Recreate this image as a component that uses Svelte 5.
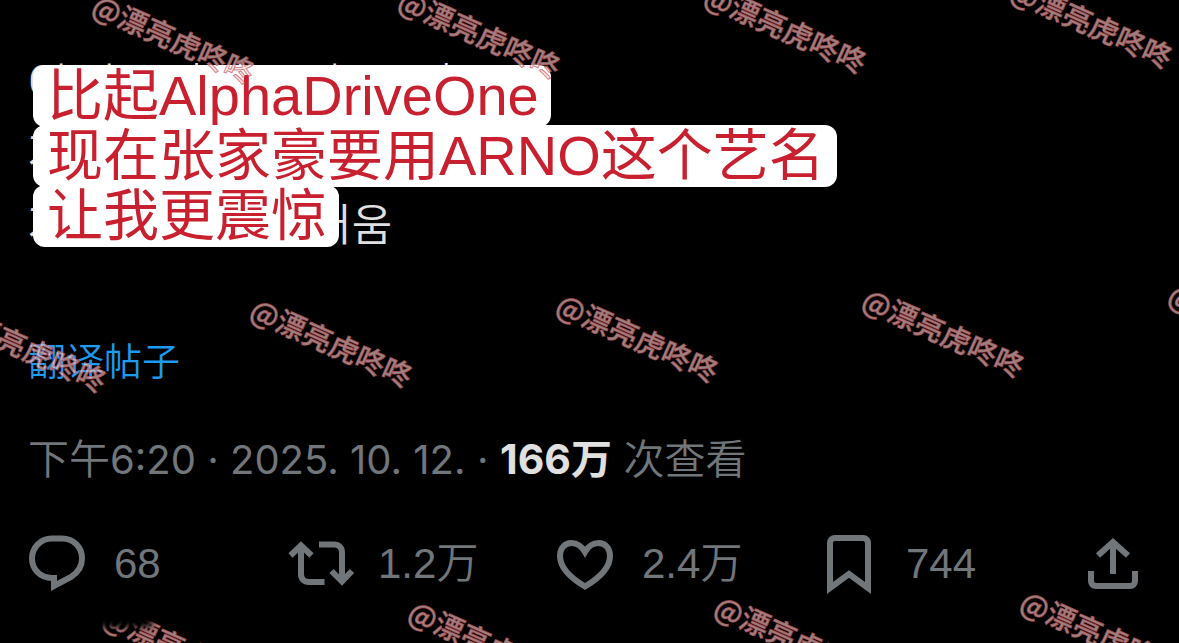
<script lang="ts">
	const handle = '@漂亮虎咚咚';

	const captions = ['比起AlphaDriveOne', '现在张家豪要用ARNO这个艺名', '让我更震惊'];

	// the tag repeats on a slanted grid
	const rows = [
		{ x: 95, y: 2 },
		{ x: -53, y: 311 },
		{ x: 105, y: 613 }
	];
	const marks = rows.flatMap(({ x, y }) =>
		[0, 1, 2, 3, 4].map((i) => ({ x: x + i * 306, y: y - i * 5 }))
	);
</script>

<main class="post">
	<div class="body">
		<p>Chalamda kai Chituud</p>
		<p>자기 이름을</p>
		<p>자기이름자랑스러움</p>

		<div class="captions">
			{#each captions as caption}
				<span class="caption">{caption}</span>
			{/each}
		</div>
	</div>

	<a class="translate" href="#translate">翻译帖子</a>

	<div class="meta">
		<time datetime="2025-10-12T18:20">下午<span class="digits">6:20 · 2025. 10. 12.</span></time>
		<span class="digits">·</span> <strong>166万</strong> 次查看
	</div>

	<div class="actions">
		<button class="action" aria-label="Reply">
			<svg width="58" height="58" viewBox="0 0 58 58">
				<path d="M24 3.500h10c12 0 20 9 20 20c0 8-4 14-11 18.500L26 51V43h-2C12 43 4 34 4 23.500S12 3.500 24 3.500z" />
			</svg>
			<span>68</span>
		</button>
		<button class="action" aria-label="Repost">
			<svg width="58" height="58" viewBox="4 0 58 58">
				<path d="M2.500 20.500L13 10.500L23.500 20.500M13 12v27c0 5 3 8 8 8h15.500" />
				<path d="M31 9.500h15c5 0 8 3 8 8v28M43.500 36L54 46.500L64 36" />
			</svg>
			<span>1.2万</span>
		</button>
		<button class="action" aria-label="Like">
			<svg width="58" height="58" viewBox="0 0 58 58">
				<path d="M29 17C25 10 20 8 15.500 8C8 8 4 14 4 21c0 11 9 21 25 30.500C45 42 54 32 54 21c0-7-4-13-11.500-13C38 8 33 10 29 17z" />
			</svg>
			<span>2.4万</span>
		</button>
		<button class="action" aria-label="Bookmark">
			<svg width="58" height="58" viewBox="-4 0 58 58">
				<path d="M6 53V8c0-3 2-5 5-5h28c3 0 5 2 5 5v45L25 39z" />
			</svg>
			<span>744</span>
		</button>
		<button class="action share" aria-label="Share">
			<svg width="52" height="58" viewBox="0 0 52 58">
				<path d="M11 20.500L26 7l15 13.500M26 8v31" />
				<path d="M4 36v10c0 3 2 5 5 5h34c3 0 5-2 5-5V36" />
			</svg>
		</button>
	</div>

	<div class="watermark" aria-hidden="true">
		{#each marks as mark}
			<span style="left: {mark.x}px; top: {mark.y}px">{handle}</span>
		{/each}
		<i class="smudge"></i>
	</div>
</main>

<style>
	:global(body) {
		margin: 0;
		background: #000;
	}

	.post {
		position: relative;
		box-sizing: border-box;
		min-height: 100vh;
		padding: 46px 40px 0 28px;
		overflow: hidden;
		background: #000;
		color: #71767b;
		font-family: Inter, 'Noto Sans CJK SC', sans-serif;
		font-weight: 350;
	}

	.body {
		position: relative;
		color: #e0e0e0;
		font-family: Roboto, 'Noto Sans CJK KR', sans-serif;
		font-size: 44px;
		line-height: 72px;
	}

	.body p {
		margin: 0;
	}

	.captions {
		position: absolute;
		top: 19px;
		left: 5px;
		display: flex;
		flex-direction: column;
		align-items: flex-start;
	}

	.caption {
		margin-bottom: -2px;
		padding: 0 12px 0 14px;
		border-radius: 12px;
		background: #fff;
		color: #c8202f;
		font-family: 'Liberation Sans', 'Noto Sans CJK SC', sans-serif;
		font-size: 56px;
		font-weight: 400;
		line-height: 62px;
		white-space: nowrap;
	}

	.translate {
		display: block;
		margin-top: 71px;
		color: #1d9bf0;
		font-size: 38px;
		line-height: 56px;
		text-decoration: none;
	}

	.meta {
		margin-top: 40px;
		font-size: 41px;
		line-height: 60px;
	}

	.digits {
		font-size: 40px;
		font-weight: 400;
	}

	.meta strong {
		color: #e0e0e0;
		font-weight: 700;
	}

	.actions {
		display: grid;
		grid-template-columns: repeat(4, 1fr) 55px;
		margin-top: 45px;
	}

	.action {
		display: flex;
		align-items: center;
		gap: 28px;
		padding: 0;
		border: 0;
		background: none;
		color: inherit;
		font-family: 'Liberation Sans', 'Noto Sans CJK SC', sans-serif;
		font-size: 42px;
		font-weight: 350;
		line-height: 58px;
	}

	.share {
		justify-content: flex-end;
	}

	.action svg {
		overflow: visible;
		fill: none;
		stroke: currentColor;
		stroke-width: 6;
	}

	.watermark {
		position: absolute;
		inset: 0;
		overflow: hidden;
		pointer-events: none;
	}

	.watermark span {
		position: absolute;
		color: rgba(255, 225, 225, 0.6);
		font-family: 'Noto Sans CJK SC', sans-serif;
		font-size: 29px;
		font-weight: 500;
		line-height: 30px;
		white-space: nowrap;
		transform: translateY(-50%) rotate(24deg);
		transform-origin: 0 50%;
		-webkit-text-stroke: 1px rgba(190, 80, 85, 0.7);
	}

	/* part of the tag rubbed out at the bottom left */
	.smudge {
		position: absolute;
		bottom: 16px;
		left: 92px;
		width: 60px;
		height: 44px;
		background: #000;
		filter: blur(3px);
	}
</style>
